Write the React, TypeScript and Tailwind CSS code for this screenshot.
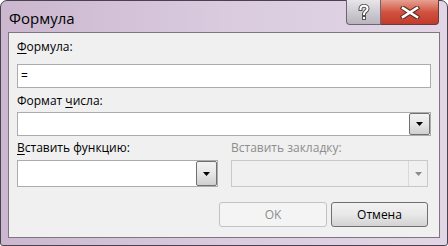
import React from 'react'

const ui = "font-['Open_Sans','Noto_Sans',sans-serif]"

const Arrow = ({ disabled }: { disabled?: boolean }) => (
  <svg width="7" height="4" viewBox="0 0 7 4">
    <path d="M0 0h7L3.5 4z" fill={disabled ? '#8a8a8a' : '#000'} />
  </svg>
)

const DropButton = ({ disabled }: { disabled?: boolean }) => (
  <div
    className={
      disabled
        ? 'flex h-full w-[19px] items-center justify-center border-l border-[#d9d9d9] bg-[#f0f0f0]'
        : 'flex h-full w-[21px] items-center justify-center rounded-[2px] border border-[#707070] bg-gradient-to-b from-[#f3f3f3] via-[#e6e6e6] to-[#cfcfcf]'
    }
  >
    <Arrow disabled={disabled} />
  </div>
)

const Label = ({ pre, key1, post, disabled }: { pre?: string; key1?: string; post: string; disabled?: boolean }) => (
  <div className={`h-[16px] text-[12px] leading-[16px] ${disabled ? 'text-[#8d8d8d]' : 'text-black'}`}>
    {pre}
    {key1 && <span className="underline underline-offset-[2px]">{key1}</span>}
    {post}
  </div>
)

export default function App() {
  return (
    <div className={`${ui} flex h-[246px] w-[448px] flex-col rounded-t-[7px] rounded-b-[3px] border border-[#4a424c] bg-gradient-to-r from-[#cbb7cf] via-[#dacbdf] to-[#e2d6e6] px-[7px] pb-[7px]`}>
      {/* title bar */}
      <div className="relative h-[31px] shrink-0">
        <div className="pl-[1px] pt-[7px] text-[15px] leading-[20px] text-black">Формула</div>
        <div className="absolute right-[1px] top-[-1px] flex h-[25px]">
          <div className="flex w-[35px] items-center justify-center rounded-bl-[4px] border border-t-0 border-[#6d6570] bg-gradient-to-b from-[#e9e6ea] via-[#cfcbd2] to-[#b9b4bd]">
            <svg width="12" height="17" viewBox="0 0 12 17">
              <path d="M2.5 5C2.5 2.8 4 1.8 6 1.8S9.5 3 9.5 4.8C9.5 7.3 6 7.3 6 10" fill="none" stroke="#555" strokeWidth="4" strokeLinecap="square" />
              <rect x="4" y="12" width="4" height="4" fill="#555" />
              <path d="M2.5 5C2.5 2.8 4 1.8 6 1.8S9.5 3 9.5 4.8C9.5 7.3 6 7.3 6 10" fill="none" stroke="#fff" strokeWidth="2" strokeLinecap="square" />
              <rect x="5" y="13" width="2" height="2" fill="#fff" />
            </svg>
          </div>
          <div className="flex w-[58px] items-center justify-center rounded-br-[4px] border border-l-0 border-t-0 border-[#6a3a36] bg-gradient-to-b from-[#e6a193] via-[#d0523f] to-[#c23a2c]">
            <svg width="20" height="13" viewBox="0 0 20 13">
              <path d="M3 2l14 9M17 2L3 11" stroke="#5a2a24" strokeWidth="4.6" strokeLinecap="square" />
              <path d="M3 2l14 9M17 2L3 11" stroke="#fff" strokeWidth="2.6" strokeLinecap="square" />
            </svg>
          </div>
        </div>
      </div>

      {/* client area */}
      <div className="flex flex-1 flex-col border border-[#7d7580] bg-[#f0f0f0] pl-[8px] pr-[8px]">
        <div className="mt-[6px]">
          <Label key1="Ф" post="ормула:" />
        </div>
        <div className="mt-[9px] flex h-[24px] items-center border border-[#acacac] bg-white pl-[3px] text-[12px] text-black">=</div>

        <div className="mt-[5px]">
          <Label pre="Формат " key1="ч" post="исла:" />
        </div>
        <div className="mt-[3px] flex h-[24px] justify-end border border-[#acacac] bg-white p-0">
          <DropButton />
        </div>

        <div className="mt-[4px] flex gap-[13px] pr-[3px]">
          <div className="flex w-[201px] flex-col">
            <Label key1="В" post="ставить функцию:" />
            <div className="mt-[4px] flex h-[27px] justify-end border border-[#acacac] bg-white">
              <DropButton />
            </div>
          </div>
          <div className="flex flex-1 flex-col">
            <Label post="Вставить закладку:" disabled />
            <div className="mt-[4px] flex h-[27px] justify-end border border-[#c8c8c8] bg-[#f0f0f0]">
              <DropButton disabled />
            </div>
          </div>
        </div>

        <div className="mt-[15px] flex justify-end gap-[4px] pr-[3px]">
          <div className="flex h-[25px] w-[108px] items-center justify-center rounded-[3px] border border-[#c0c3c5] bg-[#f4f4f4] text-[12px] text-[#8d8d8d]">
            OK
          </div>
          <div className="flex h-[25px] w-[97px] items-center justify-center rounded-[3px] border border-[#707070] bg-gradient-to-b from-[#f2f2f2] via-[#e8e8e8] to-[#d3d3d3] text-[12px] text-black">
            Отмена
          </div>
        </div>
      </div>
    </div>
  )
}
